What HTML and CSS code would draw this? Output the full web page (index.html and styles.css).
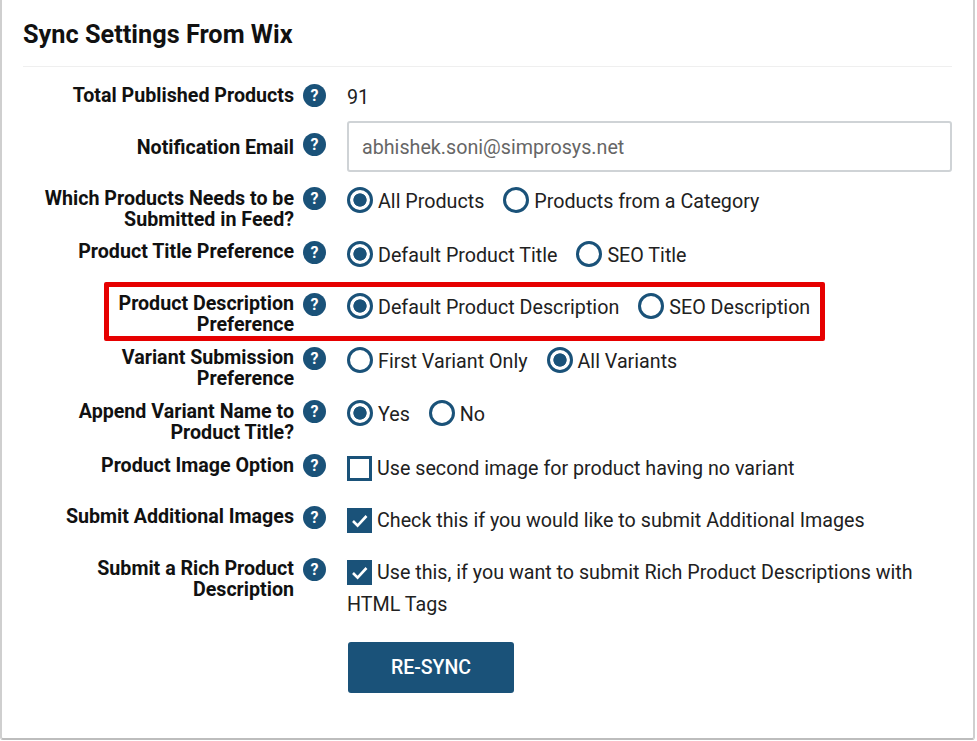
FILE: index.html
```html
<!DOCTYPE html>
<html lang="en">
<head>
<meta charset="utf-8">
<title>Sync Settings From Wix</title>
<link rel="stylesheet" href="styles.css">
</head>
<body>
<main class="card">
  <h1 class="title">Sync Settings From Wix</h1>
  <div class="row row-total">
    <div class="label"><span class="label-text nudge">Total Published Products</span><span class="help">?</span></div>
    <div class="value plain">91</div>
  </div>
  <div class="row row-email">
    <div class="label"><span class="label-text nudge">Notification Email</span><span class="help help-raised">?</span></div>
    <div class="value"><div class="input">abhishek.soni@simprosys.net</div></div>
  </div>
  <div class="row row-tall">
    <div class="label"><span class="label-text nudge">Which Products Needs to be Submitted in Feed?</span><span class="help">?</span></div>
    <div class="value options"><span class="opt"><i class="radio on"></i>All Products</span><span class="opt"><i class="radio"></i>Products from a Category</span></div>
  </div>
  <div class="row row-short">
    <div class="label"><span class="label-text">Product Title Preference</span><span class="help">?</span></div>
    <div class="value options"><span class="opt"><i class="radio on"></i>Default Product Title</span><span class="opt"><i class="radio"></i>SEO Title</span></div>
  </div>
  <div class="row row-tall">
    <div class="label"><span class="label-text label-narrow">Product Description Preference</span><span class="help">?</span></div>
    <div class="value options"><span class="opt"><i class="radio on"></i>Default Product Description</span><span class="opt"><i class="radio"></i>SEO Description</span></div>
    <div class="highlight"></div>
  </div>
  <div class="row">
    <div class="label"><span class="label-text label-narrow">Variant Submission Preference</span><span class="help">?</span></div>
    <div class="value options"><span class="opt"><i class="radio"></i>First Variant Only</span><span class="opt"><i class="radio on"></i>All Variants</span></div>
  </div>
  <div class="row row-tall">
    <div class="label"><span class="label-text label-narrow nudge">Append Variant Name to Product Title?</span><span class="help">?</span></div>
    <div class="value options"><span class="opt"><i class="radio on"></i>Yes</span><span class="opt"><i class="radio"></i>No</span></div>
  </div>
  <div class="row row-check">
    <div class="label"><span class="label-text nudge">Product Image Option</span><span class="help">?</span></div>
    <div class="value check-value"><span class="check"></span>Use second image for product having no variant</div>
  </div>
  <div class="row row-check">
    <div class="label"><span class="label-text">Submit Additional Images</span><span class="help">?</span></div>
    <div class="value check-value"><span class="check on"><svg viewBox="0 0 25 25"><path d="M6 13l4.6 4.6L19.5 8" fill="none" stroke="#fff" stroke-width="2.6"/></svg></span>Check this if you would like to submit Additional Images</div>
  </div>
  <div class="row row-check">
    <div class="label"><span class="label-text label-narrow">Submit a Rich Product Description</span><span class="help">?</span></div>
    <div class="value check-value"><span class="check on"><svg viewBox="0 0 25 25"><path d="M6 13l4.6 4.6L19.5 8" fill="none" stroke="#fff" stroke-width="2.6"/></svg></span>Use this, if you want to submit Rich Product Descriptions with HTML Tags</div>
  </div>
  <div class="actions"><button class="btn" type="button">RE-SYNC</button></div>
</main>
</body>
</html>
```
FILE: styles.css
```css
* { box-sizing: border-box; }
html, body { margin: 0; height: 100%; background: #fff; }
body { width: 977px; height: 741px; overflow: hidden; font-family: Roboto, "Liberation Sans", sans-serif; color: #212121; }
.card {
  width: 975px; height: 740px; padding: 0 0 0 21px;
  border-left: 2px solid #cfcfcf; border-right: 2px solid #cfcfcf; border-bottom: 2px solid #bdbdbd;
  border-radius: 0 0 3px 3px;
}
.title {
  margin: 0 0 17px; width: 929px; height: 67px; padding-top: 20px;
  font-size: 25.3px; line-height: 30px; font-weight: 700; color: #111;
  border-bottom: 1px solid #efefef;
}
.row { position: relative; display: flex; height: 53px; }
.row-total { height: 52px; }
.row-email { height: 51px; }
.row-tall { height: 54px; }
.row-short { height: 52px; }
.row-check { height: 52px; }
.label { width: 303px; display: flex; justify-content: flex-end; flex: none; }
.label-text { width: 271px; text-align: right; font-size: 19.65px; line-height: 21px; font-weight: 700; color: #111; }
.label-narrow { padding-left: 40px; }
.nudge { padding-top: 1px; }
.help {
  width: 23px; height: 23px; margin-left: 9px; flex: none; border-radius: 50%;
  background: #1a5279; color: #fff; font-size: 16px; line-height: 23px; font-weight: 700; text-align: center;
}
.help-raised { margin-top: -3px; }
.value { margin-left: 21px; width: 600px; font-size: 19.7px; line-height: 32px; color: #212121; }
.plain { line-height: 26px; padding-top: 1px; }
.input {
  width: 605px; height: 51px; padding: 0 13px; line-height: 49px; margin-top: -15px;
  border: 2px solid #cfd3d6; border-radius: 3px; color: #666;
}
.options { display: flex; gap: 19px; margin-top: -1px; }
.check-value { margin-top: -1px; }
.opt { display: inline-flex; align-items: flex-start; }
.radio {
  width: 26px; height: 26px; border: 3px solid #1a5279; border-radius: 50%;
  margin: 1px 5px 0 0; flex: none; background: #fff;
}
.radio.on { background: radial-gradient(circle, #1a5279 0 6.3px, #fff 7px); }
.check {
  display: inline-block; width: 25px; height: 25px; margin-right: 5px; vertical-align: -6px;
  border: 3px solid #1a5279; background: #fff;
}
.check.on { background: #1a5279; border: 0; }
.check svg { display: block; width: 25px; height: 25px; }
.highlight { position: absolute; left: 81px; top: -11px; width: 721px; height: 59px; border: 5px solid #e60000; border-radius: 2px; }
.actions { padding: 32px 0 0 325px; }
.btn {
  display: block; width: 166px; height: 51px; border: 0; border-radius: 3px; background: #1a5279; color: #fff;
  font: 500 19.5px Roboto, sans-serif;
}
```
